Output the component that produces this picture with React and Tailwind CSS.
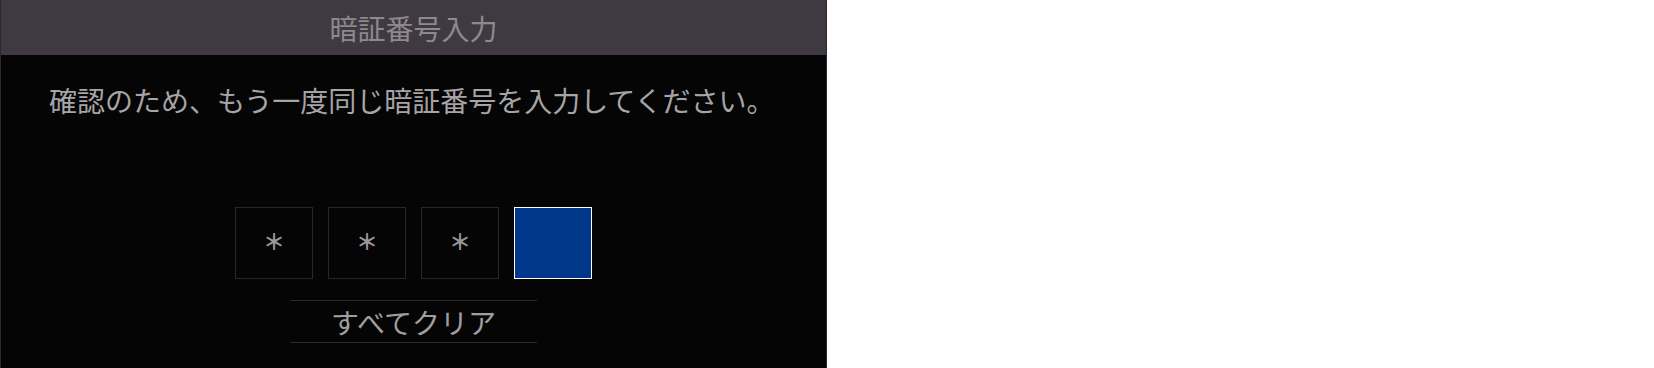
export default function App() {
  const digits = ["＊", "＊", "＊", ""];
  return (
    <div className="w-[1654px] h-[368px] bg-white flex">
      <div
        className="w-[827px] h-[368px] bg-[#050505] border-x border-[#2c2a2e] flex flex-col"
        style={{ fontFamily: '"Noto Sans CJK JP", "Noto Sans", sans-serif' }}
      >
        <div className="h-[55px] bg-[#3f3a41] flex items-center justify-center text-[28px] leading-none text-[#8e898e]">
          暗証番号入力
        </div>
        <p className="pt-[24px] pl-[48px] text-[28px] leading-[42px] text-[#a6a4a6]">
          確認のため、もう一度同じ暗証番号を入力してください。
        </p>
        <div className="mt-[86px] flex justify-center gap-[15px]">
          {digits.map((d, i) =>
            i === 3 ? (
              <div
                key={i}
                className="w-[78px] h-[72px] bg-[#00378a] border border-white"
              />
            ) : (
              <div
                key={i}
                className="w-[78px] h-[72px] border border-[#2a2628] flex items-center justify-center text-[#9a979a]"
              >
                <span className="text-[22px] font-bold leading-none -translate-y-[3px]">
                  {d}
                </span>
              </div>
            )
          )}
        </div>
        <div className="mt-[21px] flex justify-center">
          <button className="w-[247px] h-[43px] border-y border-[#2a2a2a] flex items-center justify-center text-[28px] leading-none text-[#a09ea0]">
            すべてクリア
          </button>
        </div>
      </div>
    </div>
  );
}
